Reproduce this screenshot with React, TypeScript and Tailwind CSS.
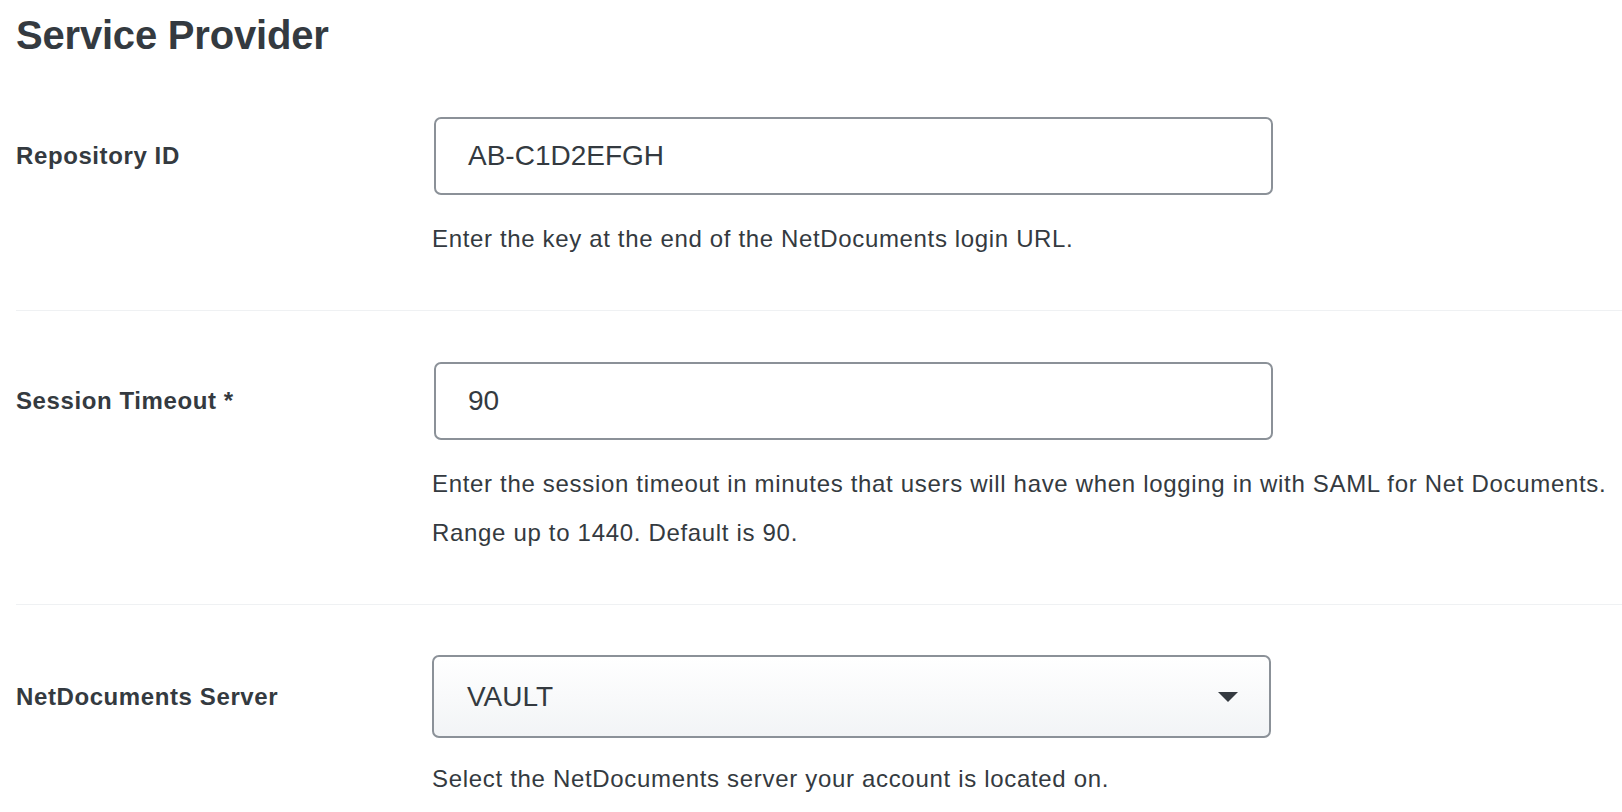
import React from "react";

function Label({ text, h }: { text: string; h: string }) {
  return (
    <div className={`w-[416px] shrink-0 flex items-center ${h}`}>
      <span className="text-[24px] font-bold tracking-[0.6px]">{text}</span>
    </div>
  );
}

export default function App() {
  return (
    <div className="w-[1622px] h-[812px] bg-white overflow-hidden text-[#343a40] font-['Liberation_Sans',Arial,sans-serif]">
      <div className="pl-4">
        <h1 className="pt-[11px] text-[40px] leading-[48px] font-bold tracking-[-0.2px]">Service Provider</h1>

        {/* Row 1 */}
        <div className="mt-[58px] flex">
          <Label text="Repository ID" h="h-[78px]" />
          <div className="flex flex-col">
            <div className="ml-[2px] w-[839px] h-[78px] border-2 border-[#8b9198] rounded-[7px] px-[32px] flex items-center text-[28px]">
              AB-C1D2EFGH
            </div>
            <p className="mt-[28px] text-[24px] leading-[32px] tracking-[0.65px]">
              Enter the key at the end of the NetDocuments login URL.
            </p>
          </div>
        </div>

        <div className="mt-[55px] border-t border-[#eff1f3]" />

        {/* Row 2 */}
        <div className="mt-[51px] flex">
          <Label text="Session Timeout *" h="h-[78px]" />
          <div className="flex flex-col">
            <div className="ml-[2px] w-[839px] h-[78px] border-2 border-[#8b9198] rounded-[7px] px-[32px] flex items-center text-[28px]">
              90
            </div>
            <p className="mt-[28px] text-[24px] leading-[32px] tracking-[0.68px] whitespace-nowrap">
              Enter the session timeout in minutes that users will have when logging in with SAML for Net Documents.
            </p>
            <p className="mt-[17px] text-[24px] leading-[32px] tracking-[0.68px]">
              Range up to 1440. Default is 90.
            </p>
          </div>
        </div>

        <div className="mt-[55px] border-t border-[#eff1f3]" />

        {/* Row 3 */}
        <div className="mt-[50px] flex">
          <Label text="NetDocuments Server" h="h-[83px]" />
          <div className="flex flex-col">
            <div className="w-[839px] h-[83px] border-2 border-[#8b9198] rounded-[7px] pl-[33px] pr-[31px] flex items-center justify-between text-[28px] bg-gradient-to-b from-white to-[#f2f4f6]">
              <span>VAULT</span>
              <svg width="20" height="10" viewBox="0 0 20 10" className="shrink-0">
                <path d="M0 0 L20 0 L10 10 Z" fill="#343a40" />
              </svg>
            </div>
            <p className="mt-[25px] text-[24px] leading-[32px] tracking-[0.68px]">
              Select the NetDocuments server your account is located on.
            </p>
          </div>
        </div>
      </div>
    </div>
  );
}
